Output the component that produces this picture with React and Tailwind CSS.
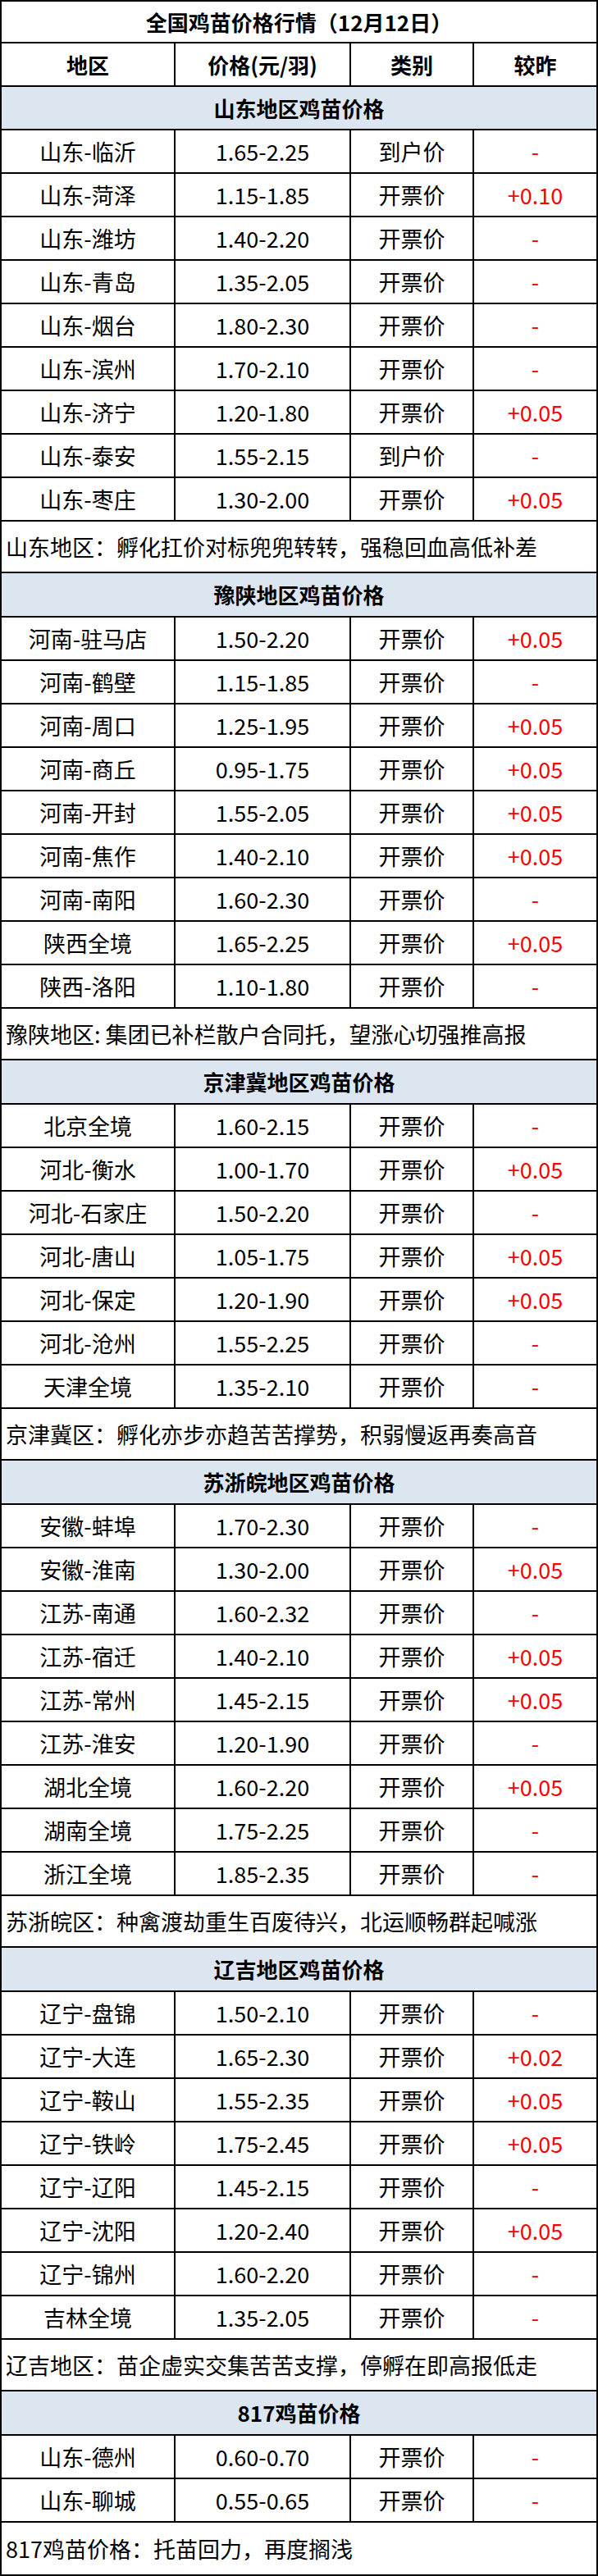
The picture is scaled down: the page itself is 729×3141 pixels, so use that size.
const sections = [
  {
    title: '山东地区鸡苗价格',
    rows: [
      ['山东-临沂', '1.65-2.25', '到户价', '-'],
      ['山东-菏泽', '1.15-1.85', '开票价', '+0.10'],
      ['山东-潍坊', '1.40-2.20', '开票价', '-'],
      ['山东-青岛', '1.35-2.05', '开票价', '-'],
      ['山东-烟台', '1.80-2.30', '开票价', '-'],
      ['山东-滨州', '1.70-2.10', '开票价', '-'],
      ['山东-济宁', '1.20-1.80', '开票价', '+0.05'],
      ['山东-泰安', '1.55-2.15', '到户价', '-'],
      ['山东-枣庄', '1.30-2.00', '开票价', '+0.05'],
    ],
    note: '山东地区：孵化扛价对标兜兜转转，强稳回血高低补差',
  },
  {
    title: '豫陕地区鸡苗价格',
    rows: [
      ['河南-驻马店', '1.50-2.20', '开票价', '+0.05'],
      ['河南-鹤壁', '1.15-1.85', '开票价', '-'],
      ['河南-周口', '1.25-1.95', '开票价', '+0.05'],
      ['河南-商丘', '0.95-1.75', '开票价', '+0.05'],
      ['河南-开封', '1.55-2.05', '开票价', '+0.05'],
      ['河南-焦作', '1.40-2.10', '开票价', '+0.05'],
      ['河南-南阳', '1.60-2.30', '开票价', '-'],
      ['陕西全境', '1.65-2.25', '开票价', '+0.05'],
      ['陕西-洛阳', '1.10-1.80', '开票价', '-'],
    ],
    note: '豫陕地区: 集团已补栏散户合同托，望涨心切强推高报',
  },
  {
    title: '京津冀地区鸡苗价格',
    rows: [
      ['北京全境', '1.60-2.15', '开票价', '-'],
      ['河北-衡水', '1.00-1.70', '开票价', '+0.05'],
      ['河北-石家庄', '1.50-2.20', '开票价', '-'],
      ['河北-唐山', '1.05-1.75', '开票价', '+0.05'],
      ['河北-保定', '1.20-1.90', '开票价', '+0.05'],
      ['河北-沧州', '1.55-2.25', '开票价', '-'],
      ['天津全境', '1.35-2.10', '开票价', '-'],
    ],
    note: '京津冀区：孵化亦步亦趋苦苦撑势，积弱慢返再奏高音',
  },
  {
    title: '苏浙皖地区鸡苗价格',
    rows: [
      ['安徽-蚌埠', '1.70-2.30', '开票价', '-'],
      ['安徽-淮南', '1.30-2.00', '开票价', '+0.05'],
      ['江苏-南通', '1.60-2.32', '开票价', '-'],
      ['江苏-宿迁', '1.40-2.10', '开票价', '+0.05'],
      ['江苏-常州', '1.45-2.15', '开票价', '+0.05'],
      ['江苏-淮安', '1.20-1.90', '开票价', '-'],
      ['湖北全境', '1.60-2.20', '开票价', '+0.05'],
      ['湖南全境', '1.75-2.25', '开票价', '-'],
      ['浙江全境', '1.85-2.35', '开票价', '-'],
    ],
    note: '苏浙皖区：种禽渡劫重生百废待兴，北运顺畅群起喊涨',
  },
  {
    title: '辽吉地区鸡苗价格',
    rows: [
      ['辽宁-盘锦', '1.50-2.10', '开票价', '-'],
      ['辽宁-大连', '1.65-2.30', '开票价', '+0.02'],
      ['辽宁-鞍山', '1.55-2.35', '开票价', '+0.05'],
      ['辽宁-铁岭', '1.75-2.45', '开票价', '+0.05'],
      ['辽宁-辽阳', '1.45-2.15', '开票价', '-'],
      ['辽宁-沈阳', '1.20-2.40', '开票价', '+0.05'],
      ['辽宁-锦州', '1.60-2.20', '开票价', '-'],
      ['吉林全境', '1.35-2.05', '开票价', '-'],
    ],
    note: '辽吉地区：苗企虚实交集苦苦支撑，停孵在即高报低走',
  },
  {
    title: '817鸡苗价格',
    rows: [
      ['山东-德州', '0.60-0.70', '开票价', '-'],
      ['山东-聊城', '0.55-0.65', '开票价', '-'],
    ],
    note: '817鸡苗价格：托苗回力，再度搁浅',
  },
]

const cols = 'grid grid-cols-[212px_214px_150px_1fr]'
const cell = 'flex items-center justify-center leading-none'

function DataRow({ row }) {
  const [area, price, kind, diff] = row
  return (
    <div className={`${cols} h-[53px] border-b-2 border-black`}>
      <div className={`${cell} border-r-2 border-black`}>{area}</div>
      <div className={`${cell} border-r-2 border-black`}>{price}</div>
      <div className={`${cell} border-r-2 border-black`}>{kind}</div>
      <div className={`${cell} text-[#ff0000]`}>{diff}</div>
    </div>
  )
}

export default function App() {
  return (
    <div
      className="w-[729px] bg-white text-black text-[27px] border-2 border-b-0 border-black"
      style={{ fontFamily: '"Noto Sans CJK SC", "Noto Sans", sans-serif' }}
    >
      {/* 标题 */}
      <div className={`${cell} h-[51px] border-b-2 border-black font-bold text-[26px]`}>
        全国鸡苗价格行情（12月12日）
      </div>

      {/* 表头 */}
      <div className={`${cols} h-[53px] border-b-2 border-black font-bold text-[26px]`}>
        <div className={`${cell} border-r-2 border-black`}>地区</div>
        <div className={`${cell} border-r-2 border-black`}>价格(元/羽)</div>
        <div className={`${cell} border-r-2 border-black`}>类别</div>
        <div className={cell}>较昨</div>
      </div>

      {sections.map((sec, i) => (
        <div key={sec.title}>
          <div
            className={`${cell} ${i === 0 ? 'h-[53px]' : 'h-[54px]'} bg-[#dce6f1] border-b-2 border-black font-bold text-[26px]`}
          >
            {sec.title}
          </div>
          {sec.rows.map(r => (
            <DataRow key={r[0]} row={r} />
          ))}
          <div
            className={`flex items-center pl-[5px] leading-none border-b-2 border-black ${
              i === sections.length - 1 ? 'h-[65px]' : 'h-[63px]'
            }`}
          >
            {sec.note}
          </div>
        </div>
      ))}
    </div>
  )
}
